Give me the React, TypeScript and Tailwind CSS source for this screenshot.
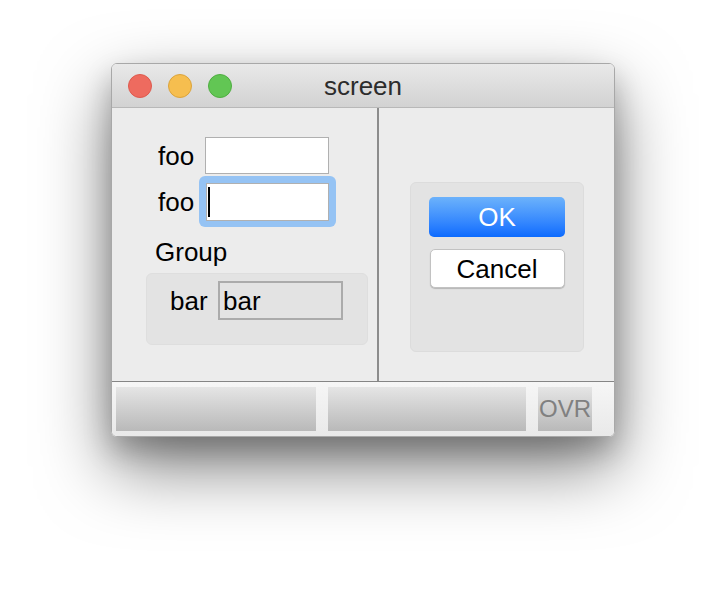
const font = { fontFamily: '"Liberation Sans", Arial, sans-serif' };

function TrafficLights() {
  return (
    <div className="flex gap-4 pl-4">
      <span className="h-6 w-6 rounded-full border border-[#de5a4e] bg-[#ee6b5f]" />
      <span className="h-6 w-6 rounded-full border border-[#dba43c] bg-[#f6be4f]" />
      <span className="h-6 w-6 rounded-full border border-[#4fae41] bg-[#62c654]" />
    </div>
  );
}

function StatusPanel({ w, children }: React.PropsWithChildren<{ w: string }>) {
  return (
    <div
      className={`${w} flex h-[44px] items-center bg-gradient-to-b from-[#e5e5e5] to-[#b9b9b9]`}
    >
      {children}
    </div>
  );
}

export default function App() {
  return (
    <div
      className="h-[596px] w-[726px] overflow-hidden bg-white pl-[111px] pt-[63px] text-[26px] leading-[30px] text-black"
      style={font}
    >
      <div className="flex h-[374px] w-[504px] flex-col overflow-hidden rounded-[6px] border border-[#a8a8a8] shadow-[0_30px_70px_rgba(0,0,0,0.5),0_14px_28px_rgba(0,0,0,0.22)]">
        {/* title bar */}
        <div className="relative flex h-[44px] shrink-0 items-center border-b border-[#b8b8b8] bg-gradient-to-b from-[#e9e9e9] to-[#d2d2d2]">
          <TrafficLights />
          <div className="absolute inset-0 flex items-center justify-center pt-[1px] text-[#2c2c2c]">
            screen
          </div>
        </div>

        {/* body */}
        <div className="flex h-[274px] shrink-0 border-b border-[#858585] bg-[#ececec]">
          <div className="w-[267px] border-r-2 border-[#8c8c8c] pt-[29px]">
            <div className="flex items-center">
              <span className="ml-[46px] w-[36px]">foo</span>
              <div className="ml-[11px] h-[37px] w-[124px] border border-[#b0b0b0] bg-white" />
            </div>
            <div className="mt-[9px] flex items-center">
              <span className="ml-[46px] w-[36px]">foo</span>
              <div className="-my-[7px] ml-[5px] rounded-[6px] bg-[#95c3f4] p-[7px] pb-[6px] pr-[7px]">
                <div className="flex h-[38px] w-[123px] items-center border border-[#b0b0b0] bg-white pl-[1px]">
                  <span className="h-[30px] w-[2px] bg-black" />
                </div>
              </div>
            </div>
            <div className="ml-[43px] mt-[17px]">Group</div>
            <div className="ml-[34px] mt-[6px] flex h-[72px] w-[222px] items-start rounded-[6px] border border-[#dedede] bg-[#e3e3e3] pt-[7px]">
              <div className="flex items-center">
                <span className="ml-[23px] w-[39px]">bar</span>
                <div className="ml-[9px] flex h-[39px] w-[125px] items-center border-2 border-[#ababab] pl-[3px]">
                  bar
                </div>
              </div>
            </div>
          </div>
          <div className="flex-1 pl-[31px] pt-[74px]">
            <div className="flex h-[170px] w-[174px] flex-col items-center rounded-[6px] border border-[#dcdcdc] bg-[#e3e3e3] pt-[14px]">
              <button className="flex h-[40px] w-[136px] items-center justify-center rounded-[5px] bg-gradient-to-b from-[#6cb2fb] to-[#0a6afe] text-white">
                OK
              </button>
              <button className="mt-[12px] flex h-[39px] w-[135px] items-center justify-center rounded-[5px] border border-[#c2c2c2] bg-white shadow-[0_1px_1px_rgba(0,0,0,0.2)]">
                Cancel
              </button>
            </div>
          </div>
        </div>

        {/* status bar */}
        <div className="flex flex-1 gap-[12px] bg-gradient-to-b from-[#f6f6f6] to-[#e9e9e9] pl-[4px] pt-[5px]">
          <StatusPanel w="w-[200px]" />
          <StatusPanel w="w-[198px]" />
          <StatusPanel w="w-[54px]">
            <span className="pl-[1px] text-[24px] text-[#808080]">OVR</span>
          </StatusPanel>
        </div>
      </div>
    </div>
  );
}
